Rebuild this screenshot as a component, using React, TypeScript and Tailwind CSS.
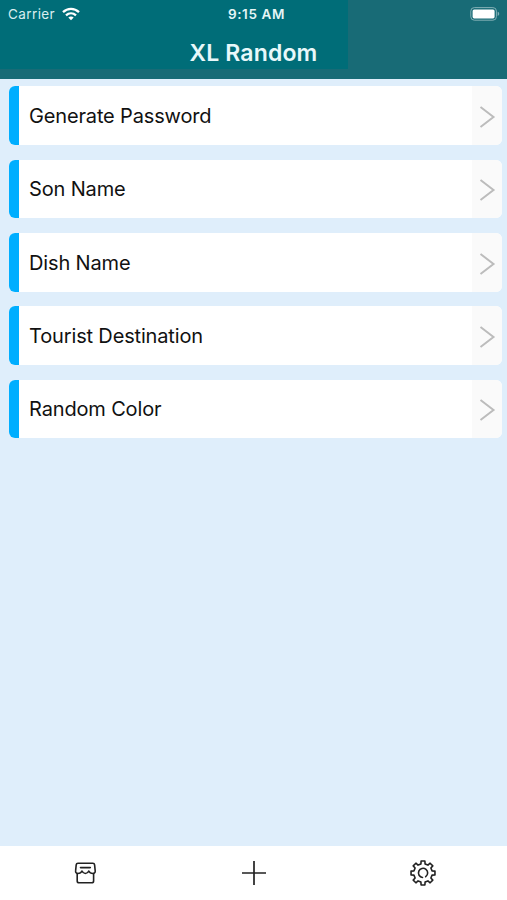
const rows = ["Generate Password", "Son Name", "Dish Name", "Tourist Destination", "Random Color"];

// Eight-toothed outline, built from polar coordinates round the centre of a 28px box.
function gearPath(): string {
  const points: string[] = [];
  const profile: [number, number][] = [
    [-13, 9.3],
    [-9, 12.1],
    [9, 12.1],
    [13, 9.3],
  ];
  for (let tooth = 0; tooth < 8; tooth++) {
    for (const [offset, radius] of profile) {
      const angle = ((tooth * 45 + offset) * Math.PI) / 180;
      points.push(`${(14 + radius * Math.sin(angle)).toFixed(2)} ${(14 - radius * Math.cos(angle)).toFixed(2)}`);
    }
  }
  return `M${points.join("L")}Z`;
}

function StatusBar() {
  return (
    <div className="grid h-[29px] grid-cols-3 items-center pr-[7px] pl-[8px] text-[13px] text-white">
      <div className="flex items-center gap-[7px]">
        <span className="text-[13.5px] tracking-[0.4px] text-[#d9edef]">Carrier</span>
        <svg width="18" height="14" viewBox="0 0 18 14" fill="none" stroke="white" strokeWidth="2.3" className="mb-[2px]">
          <path d="M1 5.2C5.6.8 12.4.8 17 5.2" />
          <path d="M4 8.4c2.9-2.7 7.1-2.7 10 0" />
          <path d="M9 13.2 6.3 10.5c1.500-1.400 3.900-1.400 5.400 0Z" fill="white" stroke="none" />
        </svg>
      </div>
      <span className="pl-[5px] text-center text-[13.5px] font-semibold tracking-[0.6px] whitespace-nowrap text-[#e5f5f6]">9:15 AM</span>
      <svg className="mb-[2px] justify-self-end" width="30" height="14" viewBox="0 0 30 14">
        <rect x=".8" y=".6" width="25.6" height="12.6" rx="3.5" fill="none" stroke="#83b0b6" />
        <rect x="2.6" y="2.4" width="22" height="9" rx="1.6" fill="white" />
        <path d="M27.7 4.8c2 .7 2 3.5 0 4.2Z" fill="#83b0b6" />
      </svg>
    </div>
  );
}

function Row({ label }: { label: string }) {
  return (
    <li className="flex h-[58.6px] overflow-hidden rounded-[6px] bg-white">
      <div className="w-[10px] bg-[#00aeff]" />
      <span className="flex flex-1 items-center pt-px pl-[9.7px] text-[20px] tracking-[-0.16px] text-[#111111]">{label}</span>
      <div className="flex w-[30px] items-center justify-center bg-[#fafafa]">
        <svg width="18" height="24" viewBox="0 0 18 24" fill="none" stroke="#bcbcbc" strokeWidth="2" className="mt-[3px]">
          <path d="M2.5 2 15.5 12 2.5 22" />
        </svg>
      </div>
    </li>
  );
}

function TabBar() {
  return (
    <nav className="grid h-[54px] grid-cols-3 place-items-center bg-white text-[#222222]">
      <svg width="28" height="28" viewBox="0 0 28 28" fill="none" stroke="currentColor" strokeWidth="1.6" strokeLinejoin="round" strokeLinecap="round">
        <path d="M7 4.300h14.800c1.100 0 1.700.6 1.800 1.600l.6 6c.2 1.600-.8 2.600-2.200 2.600-2.100 0-3.500-.9-4.200-2.500-.6 1.300-1.800 2.500-3.400 2.500s-2.800-1.200-3.400-2.500c-.7 1.600-2.100 2.500-4.200 2.500-1.400 0-2.400-1-2.200-2.600l.6-6c.1-1 .7-1.600 1.800-1.600Z" />
        <path d="M9.500 8.600h9.800M6.200 14.500v7.400c0 1.200.7 1.900 1.900 1.900h12.600c1.200 0 1.900-.7 1.900-1.900v-7.400" />
      </svg>
      <svg width="28" height="28" viewBox="0 0 28 28" fill="none" stroke="currentColor" strokeWidth="1.7">
        <path d="M14 2v24M2 14h24" />
      </svg>
      <svg width="28" height="28" viewBox="0 0 28 28" fill="none" stroke="currentColor" strokeWidth="1.600" strokeLinejoin="round" strokeLinecap="round">
        <path d={gearPath()} />
        <path d="M13.500 18.500A4.600 4.600 0 1 1 16.700 17.700" />
      </svg>
    </nav>
  );
}

export default function App() {
  return (
    <div className="flex h-[900px] w-[507px] flex-col overflow-hidden bg-[#dfeefb] font-['Inter','Liberation_Sans',sans-serif]">
      <header className="h-[79px] bg-[#186b76] bg-[linear-gradient(#006d78,#006d78)] bg-[length:348px_69px] bg-no-repeat">
        <StatusBar />
        <h1 className="pt-[7px] text-center text-[23px] leading-[34px] font-semibold tracking-[0.15px] text-[#e8f8fa]">XL Random</h1>
      </header>
      <ul className="flex flex-1 flex-col gap-[14.7px] pt-[7.4px] pr-[5px] pl-[9.400px]">
        {rows.map((label) => (
          <Row key={label} label={label} />
        ))}
      </ul>
      <TabBar />
    </div>
  );
}
